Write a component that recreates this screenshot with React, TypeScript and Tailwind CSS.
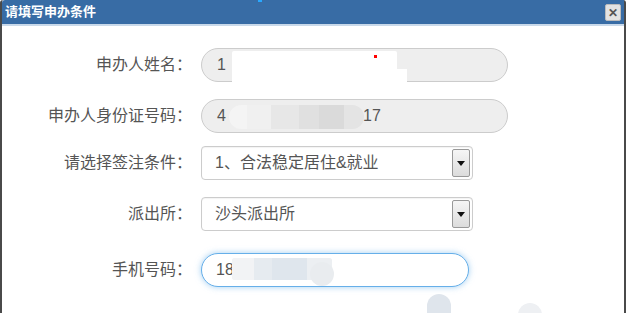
import React from 'react';

const font = { fontFamily: '"Liberation Sans", "Noto Sans CJK SC", sans-serif' };

function Label({ text }: { text: string }) {
  return (
    <div className="w-[191px] shrink-0 text-right text-[16px] text-[#555] pr-[1px]">{text}：</div>
  );
}

function SelectBox({ value }: { value: string }) {
  return (
    <div className="ml-[8px] w-[272px] h-[34px] border border-[#ccc] rounded-[4px] bg-white flex items-center shadow-[inset_0_1px_1px_rgba(0,0,0,0.05)]">
      <span className="pl-[13px] text-[16px] text-[#555] flex-1">{value}</span>
      <div className="w-[18px] h-[28px] mr-[2px] border border-[#999] rounded-[2px] bg-gradient-to-b from-[#f6f6f6] to-[#dcdcdc] flex items-center justify-center">
        <div className="w-0 h-0 border-l-[4px] border-r-[4px] border-t-[5px] border-l-transparent border-r-transparent border-t-[#111]" />
      </div>
    </div>
  );
}

export default function App() {
  return (
    <div className="w-[630px] h-[313px] bg-white overflow-hidden relative" style={font}>
      <div className="w-[626px] h-[313px] border-l-2 border-r-2 border-[#4a4a4a] rounded-tl-[3px] rounded-tr-[3px] relative">
        {/* header */}
        <div className="h-[26px] bg-[#386ca5] border-b-2 border-[#c9d9ea] flex items-center justify-between pl-[3px] pr-[3px] rounded-tl-[3px]">
          <span className="text-white text-[13px] font-bold">请填写申办条件</span>
          <div className="w-[16px] h-[17px] mt-[1px] bg-[#e3e3e3] border border-[#bbb] rounded-[2px] flex items-center justify-center text-[#555] text-[12px] font-bold leading-none">✕</div>
        </div>
        <div className="absolute left-[256px] top-0 w-[4px] h-[2px] bg-[#29a8ff]" />

        {/* row 1 */}
        <div className="mt-[22px] flex items-center">
          <Label text="申办人姓名" />
          <div className="ml-[8px] w-[307px] h-[34px] border border-[#ccc] rounded-full bg-[#eee] flex items-center pl-[15px] text-[16px] text-[#555] relative">
            <span>1</span>
            <div className="absolute left-[30px] top-[2px] w-[165px] h-[38px] bg-white rounded-[2px]" />
            <div className="absolute left-[115px] top-[20px] w-[90px] h-[16px] bg-white" />
            <div className="absolute left-[172px] top-[6px] w-[3px] h-[3px] bg-[#f00]" />
          </div>
        </div>

        {/* row 2 */}
        <div className="mt-[17px] flex items-center">
          <Label text="申办人身份证号码" />
          <div className="ml-[8px] w-[307px] h-[34px] border border-[#ccc] rounded-full bg-[#eee] flex items-center pl-[15px] text-[16px] text-[#555] relative">
            <span>4</span>
            <div className="absolute left-[27px] top-[5px] w-[135px] h-[24px] rounded-[12px] bg-[#ececec] flex overflow-hidden">
              <div className="w-[18px] bg-[#f4f4f4]" />
              <div className="w-[24px] bg-[#f0f0f0]" />
              <div className="w-[28px] bg-[#e7e7e7]" />
              <div className="w-[20px] bg-[#e0e0e0]" />
              <div className="w-[25px] bg-[#dadada]" />
              <div className="w-[20px] bg-[#e4e4e4]" />
            </div>
            <span className="absolute left-[161px]">17</span>
          </div>
        </div>

        {/* row 3 */}
        <div className="mt-[13px] flex items-center">
          <Label text="请选择签注条件" />
          <SelectBox value="1、合法稳定居住&就业" />
        </div>

        {/* row 4 */}
        <div className="mt-[17px] flex items-center">
          <Label text="派出所" />
          <SelectBox value="沙头派出所" />
        </div>

        {/* row 5 */}
        <div className="mt-[22px] flex items-center">
          <Label text="手机号码" />
          <div className="ml-[8px] w-[268px] h-[34px] border border-[#66afe9] rounded-full bg-white flex items-center pl-[14px] text-[16px] text-[#555] shadow-[0_0_6px_rgba(102,175,233,0.6)] relative">
            <span>18</span>
            <div className="absolute left-[30px] top-[4px] w-[100px] h-[22px] bg-[#eef1f4] rounded-[3px] flex overflow-hidden">
              <div className="w-[22px] bg-[#f2f3f5]" />
              <div className="w-[18px] bg-[#e6ebf0]" />
              <div className="w-[35px] bg-[#dfe6ed]" />
              <div className="w-[25px] bg-[#eceff2]" />
            </div>
            <div className="absolute left-[108px] top-[8px] w-[24px] h-[24px] rounded-full bg-[#e9ecef]" />
          </div>
        </div>

        <div className="absolute left-[425px] top-[294px] w-[24px] h-[30px] rounded-t-full bg-[#dfe5ec]" />
        <div className="absolute left-[516px] top-[303px] w-[24px] h-[30px] rounded-t-full bg-[#eef0f3]" />
      </div>
    </div>
  );
}
